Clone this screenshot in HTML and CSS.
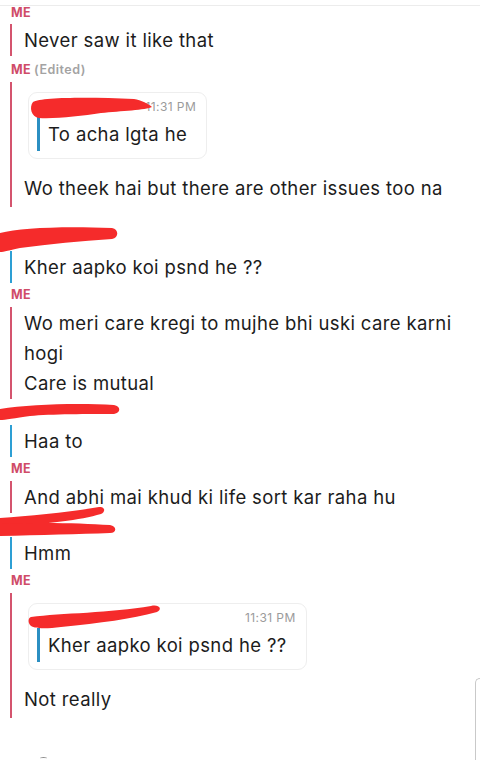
FILE: index.html
```html
<!DOCTYPE html>
<html>
<head>
<meta charset="utf-8">
<link rel="stylesheet" href="styles.css">
</head>
<body>
<div class="topbar"></div>
<div class="chat">
  <div class="label me first">ME</div>
  <div class="group me"><p class="msg">Never saw it like that</p></div>

  <div class="label me edited-row">ME <span class="edited">(Edited)</span></div>
  <div class="group me">
    <div class="quote">
      <div class="quote-head"><span class="redacted"></span><span class="time">11:31 PM</span></div>
      <p class="quote-text">To acha lgta he</p>
      <svg class="scribble s-a" width="140" height="32" viewBox="0 0 140 32"><path d="M4,9 C12,4 62,4 105,6 C112,7 120,11 123,14 C117,17 92,18 72,20 C52,23 27,26 10,25 C2,24 0,14 4,9 Z"/></svg>
    </div>
    <p class="msg after-quote">Wo theek hai but there are other issues too na</p>
  </div>

  <div class="label them tall">
    <svg class="scribble s-b" width="130" height="50" viewBox="0 0 130 50"><path d="M0,26 C20,21 60,19 112,21 C119,22 119,31 112,32 C80,34 50,37 20,41 C10,43 4,45 0,45 Z"/></svg>
  </div>
  <div class="group them"><p class="msg">Kher aapko koi psnd he ??</p></div>

  <div class="label me">ME</div>
  <div class="group me">
    <p class="msg">Wo meri care kregi to mujhe bhi uski care karni hogi</p>
    <p class="msg">Care is mutual</p>
  </div>

  <div class="label them roomy">
    <svg class="scribble s-c" width="130" height="24" viewBox="0 0 130 24"><path d="M0,10 C30,5 80,4 114,6 C121,7 121,14 114,15 C90,15 50,15 30,17 C15,19 5,21 0,21 Z"/></svg>
  </div>
  <div class="group them"><p class="msg">Haa to</p></div>

  <div class="label me">ME</div>
  <div class="group me"><p class="msg">And abhi mai khud ki life sort kar raha hu</p></div>

  <div class="label them">
    <svg class="scribble s-d" width="130" height="36" viewBox="0 0 130 36"><path d="M0,15 C30,13 70,9 99,4 C105,3 106,9 101,11 C80,17 50,21 0,23 Z"/><path d="M0,21 C40,19 80,20 110,22 C117,23 117,30 110,30 C80,31 40,32 0,33 Z"/></svg>
  </div>
  <div class="group them"><p class="msg">Hmm</p></div>

  <div class="label me">ME</div>
  <div class="group me">
    <div class="quote">
      <div class="quote-head"><span class="redacted"></span><span class="time">11:31 PM</span></div>
      <p class="quote-text">Kher aapko koi psnd he ??</p>
      <svg class="scribble s-e" width="140" height="30" viewBox="0 0 140 30"><path d="M2,13 C32,9 82,9 122,2 C130,0 134,5 128,8 C102,15 72,19 32,23 C17,25 4,25 1,21 C-1,18 -1,14 2,13 Z"/></svg>
    </div>
    <p class="msg after-quote">Not really</p>
  </div>
</div>
<div class="edge-card"></div>
<div class="edge-mark"></div>
</body>
</html>
```

FILE: styles.css
```css
html, body {
  margin: 0;
  padding: 0;
  background: #ffffff;
}
body {
  width: 480px;
  height: 760px;
  overflow: hidden;
  position: relative;
  font-family: "Inter", "Lato", sans-serif;
  color: #1c1c1c;
}
.topbar {
  height: 5px;
  border-bottom: 1px solid #ececec;
}
.chat {
  display: flex;
  flex-direction: column;
}
.label {
  position: relative;
  height: 24px;
  line-height: 24px;
  padding-left: 11px;
  font-size: 12.5px;
  font-weight: 700;
  letter-spacing: 0.3px;
}
.label.me { color: #cf4c68; }
.label.first {
  height: 18px;
  line-height: 14px;
}
.label.edited-row {
  height: 26px;
  line-height: 27px;
}
.label.tall { height: 44px; }
.label.roomy { height: 26px; }
.edited {
  color: #a3a3a3;
  font-weight: 600;
  letter-spacing: 0.5px;
}
.group {
  margin-left: 10px;
  padding: 1px 0 1px 12px;
  border-left: 2px solid #d4546e;
}
.group.them { border-left-color: #2d9fd4; }
.msg {
  margin: 0;
  font-size: 18.5px;
  letter-spacing: 0.37px;
  line-height: 30px;
  padding-right: 20px;
}
.msg.after-quote {
  margin-top: 14px;
  margin-bottom: 3px;
}
.quote {
  position: relative;
  align-self: flex-start;
  display: inline-flex;
  flex-direction: column;
  gap: 2px;
  margin: 9px 0 0 4px;
  padding: 5px 10px 7px 8px;
  border: 1px solid #eeeeee;
  border-radius: 9px;
}
.quote-head {
  display: flex;
  justify-content: space-between;
  align-items: center;
  gap: 4px;
  height: 17px;
}
.redacted {
  width: 100px;
  height: 10px;
}
.time {
  font-size: 12px;
  letter-spacing: 0.4px;
  color: #9b9b9b;
}
.quote-text {
  margin: 0 9px 0 0;
  padding-left: 8px;
  border-left: 3px solid #2b8fc2;
  font-size: 18.5px;
  letter-spacing: 0.37px;
  line-height: 34px;
}
.scribble {
  position: absolute;
  left: 0;
  top: 0;
  fill: #f52b2b;
  overflow: visible;
}
.s-d { top: -10px; }
.edge-card {
  position: absolute;
  left: 475px;
  top: 678px;
  width: 5px;
  height: 82px;
  border: 1px solid #c9c9c9;
  border-right: none;
  border-bottom: none;
  border-radius: 8px 0 0 0;
  box-sizing: border-box;
}
.edge-mark {
  position: absolute;
  left: 40px;
  top: 757px;
  width: 7px;
  height: 3px;
  border-top: 1.5px solid #8a8a8a;
  border-radius: 50% 50% 0 0;
  box-sizing: border-box;
}
```
